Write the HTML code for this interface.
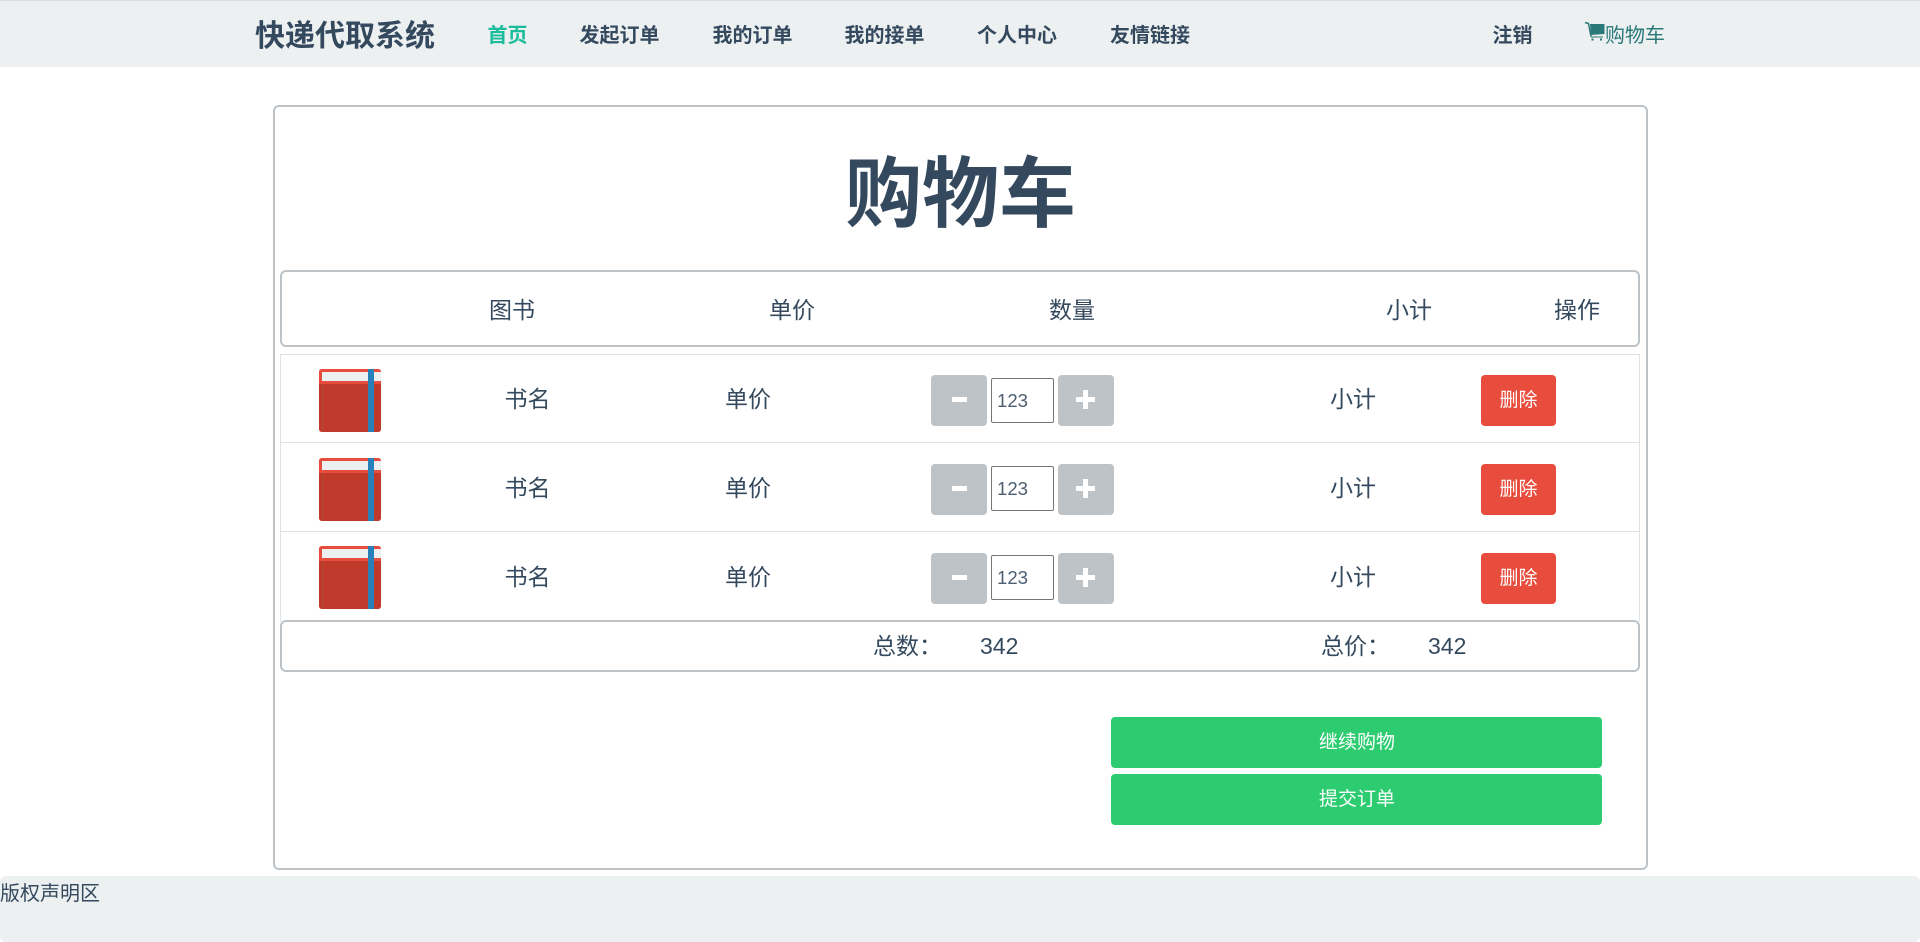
<!DOCTYPE html>
<html lang="zh">
<head>
<meta charset="utf-8">
<title>购物车</title>
<style>
html,body{margin:0;padding:0;background:#fff;}
body{width:1920px;height:942px;position:relative;overflow:hidden;font-family:"Liberation Sans","Noto Sans CJK SC",sans-serif;color:#34495e;}
.a{position:absolute;white-space:nowrap;}
.t{position:absolute;white-space:nowrap;font-size:23px;line-height:32px;height:32px;}
.nav{position:absolute;left:0;top:0;width:1920px;height:67px;background:#ecf0f1;border-top:1px solid #d9dee0;box-sizing:border-box;}
.n{position:absolute;top:20px;line-height:32px;font-size:20px;font-weight:700;color:#34495e;white-space:nowrap;}
.box{position:absolute;box-sizing:border-box;border:2px solid #bdc3c7;border-radius:6px;background:#fff;}
.line{position:absolute;left:280px;width:1360px;height:1px;background:#dfe2e4;}
.btn{position:absolute;background:#bdc3c7;border-radius:4px;color:#fff;text-align:center;}
.del{position:absolute;background:#e74c3c;border-radius:4px;color:#fff;text-align:center;font-size:19px;line-height:51px;width:75px;height:51px;left:1481px;}
.inp{position:absolute;left:991px;width:63px;height:45px;box-sizing:border-box;border:1px solid #767676;border-radius:2px;background:#fff;font-size:18.6px;line-height:43px;padding-left:5px;color:#4c5e72;}
.go{position:absolute;left:1111px;width:491px;height:51px;background:#2ecc71;border-radius:4px;color:#fff;text-align:center;font-size:19px;line-height:51px;padding-left:1px;box-sizing:border-box;}
.m{position:absolute;left:21px;top:22px;width:15px;height:5px;background:#fff;}
.p1{position:absolute;left:18px;top:22px;width:19px;height:5px;background:#fff;}
.p2{position:absolute;left:25px;top:15px;width:5px;height:19px;background:#fff;}
svg{position:absolute;display:block;}
</style>
</head>
<body>
<div class="nav"></div>
<div class="a" style="left:255px;top:16px;font-size:30px;line-height:42px;font-weight:700;">快递代取系统</div>
<div class="n" style="left:487.5px;color:#1abc9c;">首页</div>
<div class="n" style="left:579.5px;">发起订单</div>
<div class="n" style="left:712.5px;">我的订单</div>
<div class="n" style="left:844.5px;">我的接单</div>
<div class="n" style="left:977px;">个人中心</div>
<div class="n" style="left:1110px;">友情链接</div>
<div class="n" style="left:1492.5px;">注销</div>
<svg style="left:1584px;top:20px" width="24" height="22" viewBox="0 0 24 22"><path d="M1 2.5 L4.5 3.5 L7 16.5" fill="none" stroke="#2a7878" stroke-width="1.5"/><path d="M6 4 H20.5 V14 L7 15 Z" fill="#2a7878"/><path d="M7 17 H19" stroke="#2a7878" stroke-width="1"/><rect x="7.5" y="18.5" width="2" height="2" fill="#2a7878"/><rect x="16" y="18.5" width="2" height="2" fill="#2a7878"/></svg>
<div class="a" style="left:1605px;top:20px;font-size:20px;line-height:32px;color:#2a7878;">购物车</div>

<div class="box" style="left:273px;top:105px;width:1375px;height:765px;"></div>
<div class="a" style="left:845px;top:139px;font-size:77px;line-height:112px;font-weight:700;">购物车</div>

<div class="box" style="left:280px;top:270px;width:1360px;height:77px;"></div>
<div class="t" style="left:489px;top:294px;">图书</div>
<div class="t" style="left:769px;top:294px;">单价</div>
<div class="t" style="left:1049px;top:294px;">数量</div>
<div class="t" style="left:1386px;top:294px;">小计</div>
<div class="t" style="left:1554px;top:294px;">操作</div>

<div class="a" style="left:280px;top:354px;width:1360px;height:268px;box-sizing:border-box;border:1px solid #dfe2e4;border-bottom:0;"></div>
<div class="line" style="top:442px;"></div>
<div class="line" style="top:531px;"></div>

<!-- row 1 -->
<svg style="left:319px;top:369px" width="62" height="63" viewBox="0 0 62 63"><rect width="62" height="63" rx="3" fill="#c0392b"/><path d="M0 15 V3 A3 3 0 0 1 3 0 H59 A3 3 0 0 1 62 3 V15 Z" fill="#e74c3c"/><rect x="3" y="3" width="59" height="9" fill="#ecf0f1"/><path d="M0 15 H62 V60 A3 3 0 0 1 59 63 H3 A3 3 0 0 1 0 60 Z" fill="#c0392b"/><rect x="3" y="15" width="2" height="48" fill="#b5442f"/><rect x="49" y="0" width="6" height="63" fill="#2980b9"/></svg>
<div class="t" style="left:504.5px;top:382.5px;">书名</div>
<div class="t" style="left:725px;top:382.5px;">单价</div>
<div class="btn" style="left:931px;top:375px;width:56px;height:51px;"><div class="m"></div></div>
<div class="inp" style="top:378px;">123</div>
<div class="btn" style="left:1058px;top:375px;width:56px;height:51px;"><div class="p1"></div><div class="p2"></div></div>
<div class="t" style="left:1330px;top:382.5px;">小计</div>
<div class="del" style="top:375px;">删除</div>

<!-- row 2 -->
<svg style="left:319px;top:458px" width="62" height="63" viewBox="0 0 62 63"><rect width="62" height="63" rx="3" fill="#c0392b"/><path d="M0 15 V3 A3 3 0 0 1 3 0 H59 A3 3 0 0 1 62 3 V15 Z" fill="#e74c3c"/><rect x="3" y="3" width="59" height="9" fill="#ecf0f1"/><path d="M0 15 H62 V60 A3 3 0 0 1 59 63 H3 A3 3 0 0 1 0 60 Z" fill="#c0392b"/><rect x="3" y="15" width="2" height="48" fill="#b5442f"/><rect x="49" y="0" width="6" height="63" fill="#2980b9"/></svg>
<div class="t" style="left:504.5px;top:471.5px;">书名</div>
<div class="t" style="left:725px;top:471.5px;">单价</div>
<div class="btn" style="left:931px;top:464px;width:56px;height:51px;"><div class="m"></div></div>
<div class="inp" style="top:466px;">123</div>
<div class="btn" style="left:1058px;top:464px;width:56px;height:51px;"><div class="p1"></div><div class="p2"></div></div>
<div class="t" style="left:1330px;top:471.5px;">小计</div>
<div class="del" style="top:464px;">删除</div>

<!-- row 3 -->
<svg style="left:319px;top:546px" width="62" height="63" viewBox="0 0 62 63"><rect width="62" height="63" rx="3" fill="#c0392b"/><path d="M0 15 V3 A3 3 0 0 1 3 0 H59 A3 3 0 0 1 62 3 V15 Z" fill="#e74c3c"/><rect x="3" y="3" width="59" height="9" fill="#ecf0f1"/><path d="M0 15 H62 V60 A3 3 0 0 1 59 63 H3 A3 3 0 0 1 0 60 Z" fill="#c0392b"/><rect x="3" y="15" width="2" height="48" fill="#b5442f"/><rect x="49" y="0" width="6" height="63" fill="#2980b9"/></svg>
<div class="t" style="left:504.5px;top:560.5px;">书名</div>
<div class="t" style="left:725px;top:560.5px;">单价</div>
<div class="btn" style="left:931px;top:553px;width:56px;height:51px;"><div class="m"></div></div>
<div class="inp" style="top:555px;">123</div>
<div class="btn" style="left:1058px;top:553px;width:56px;height:51px;"><div class="p1"></div><div class="p2"></div></div>
<div class="t" style="left:1330px;top:560.5px;">小计</div>
<div class="del" style="top:553px;">删除</div>

<div class="box" style="left:280px;top:620px;width:1360px;height:52px;"></div>
<div class="t" style="left:873px;top:629.5px;">总数：</div>
<div class="t" style="left:980px;top:629.5px;">342</div>
<div class="t" style="left:1321px;top:629.5px;">总价：</div>
<div class="t" style="left:1428px;top:629.5px;">342</div>

<div class="go" style="top:717px;">继续购物</div>
<div class="go" style="top:774px;">提交订单</div>

<div class="a" style="left:0;top:876px;width:1920px;height:66px;background:#ecf0f1;border-radius:6px;"></div>
<div class="a" style="left:0;top:878px;font-size:20px;line-height:32px;">版权声明区</div>
</body>
</html>
